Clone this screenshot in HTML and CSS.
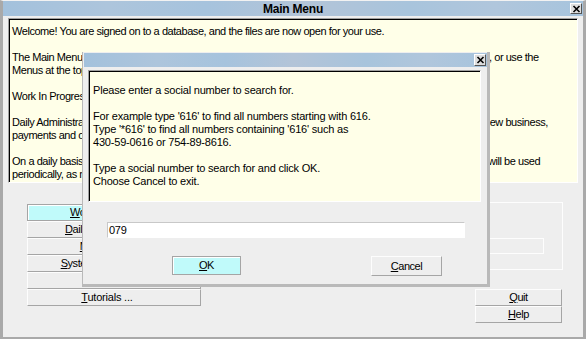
FILE: index.html
```html
<!DOCTYPE html>
<html>
<head>
<meta charset="utf-8">
<link rel="stylesheet" href="styles.css">
</head>
<body>
<div class="window">
  <div class="titlebar">
    <span class="title">Main Menu</span>
    <span class="close main-close"><svg width="9" height="8" viewBox="0 0 9 8"><path d="M1.5 1 L7.5 7 M7.5 1 L1.5 7" stroke="#000" stroke-width="1.6"/></svg></span>
  </div>
  <div class="body">
    <div class="memo">
      <p class="line">Welcome! You are signed on to a database, and the files are now open for your use.</p>
      <p class="line blank"></p>
      <p class="line split s1"><span class="l">The Main Menu lets you choose the area of the system you want to work in</span><span class="r">, or use the</span></p>
      <p class="line">Menus at the top of the screen to go directly to a specific program.</p>
      <p class="line blank"></p>
      <p class="line">Work In Progress lets you review items that have not been completed.</p>
      <p class="line blank"></p>
      <p class="line split s2"><span class="l">Daily Administration is where you would normally enter and review</span><span class="r">new business,</span></p>
      <p class="line">payments and other daily transactions.</p>
      <p class="line blank"></p>
      <p class="line split s3"><span class="l">On a daily basis you will use the first two areas; the remaining areas</span><span class="r">will be used</span></p>
      <p class="line">periodically, as needed.</p>
    </div>
    <div class="lower">
      <div class="menu-buttons">
        <div class="btn hl"><u>W</u>ork In Progress ...</div>
        <div class="btn"><u>D</u>aily Administration ...</div>
        <div class="btn"><u>M</u>aintenance ...</div>
        <div class="btn"><u>S</u>ystem Management ...</div>
        <div class="btn"><u>I</u>nquiries ...</div>
        <div class="btn tut"><u>T</u>utorials ...</div>
      </div>
      <div class="side">
        <div class="group"><div class="field"></div></div>
        <div class="qh">
          <div class="btn small"><u>Q</u>uit</div>
          <div class="btn small"><u>H</u>elp</div>
        </div>
      </div>
    </div>
  </div>

  <div class="dialog">
    <div class="titlebar dlg-title">
      <span class="close dlg-close"><svg width="9" height="8" viewBox="0 0 9 8"><path d="M1.5 1 L7.5 7 M7.5 1 L1.5 7" stroke="#000" stroke-width="1.6"/></svg></span>
    </div>
    <div class="memo dlg-memo">
      <p class="line">Please enter a social number to search for.</p>
      <p class="line blank"></p>
      <p class="line">For example type '616' to find all numbers starting with 616.</p>
      <p class="line">Type '*616' to find all numbers containing '616' such as</p>
      <p class="line">430-59-0616 or 754-89-8616.</p>
      <p class="line blank"></p>
      <p class="line">Type a social number to search for and click OK.</p>
      <p class="line">Choose Cancel to exit.</p>
    </div>
    <div class="input">079</div>
    <div class="dlg-buttons">
      <div class="btn ok"><u>O</u>K</div>
      <div class="btn cancel"><u>C</u>ancel</div>
    </div>
  </div>
</div>
</body>
</html>
```

FILE: styles.css
```css
* { box-sizing: border-box; margin: 0; padding: 0; }
html, body { width: 586px; height: 339px; overflow: hidden; }
body {
  font-family: "Liberation Sans", Arial, sans-serif;
  font-size: 11px;
  color: #000;
  background: #eeeeee;
}
.window {
  position: relative;
  width: 586px;
  height: 339px;
  background: #eeeeee;
  border-top: 1px solid #f2f2f2;
  border-left: 3px solid #a9a9a9;
  border-right: 3px solid #a9a9a9;
  border-bottom: 2px solid #a9a9a9;
}
.titlebar {
  position: relative;
  height: 15px;
  display: flex;
  align-items: center;
  justify-content: center;
  background: linear-gradient(90deg, #a3c1dc 0%, #adc5dc 18%, #a6c3dd 35%, #b3c4d8 52%, #a8c4dc 70%, #b0c6dc 85%, #a7c4dd 100%);
}
.title { font-weight: bold; font-size: 12px; letter-spacing: -0.2px; }
.close {
  position: absolute;
  width: 12px;
  height: 11px;
  background: #dedede;
  border-top: 1px solid #fff;
  border-left: 1px solid #fff;
  border-right: 1px solid #555;
  border-bottom: 1px solid #555;
  display: flex;
  align-items: center;
  justify-content: center;
}
.main-close { right: 1px; top: 2px; }
.body { padding: 2px 5px 0 5px; }
.memo {
  height: 165px;
  background: #ffffe8;
  border: 1px solid;
  border-color: #a0a0a0 #fff #fff #a0a0a0;
  box-shadow: inset 1px 1px 0 #000;
  padding: 6px 3px 0 3px;
  overflow: hidden;
}
.line {
  height: 13px;
  line-height: 13px;
  white-space: nowrap;
  letter-spacing: -0.45px;
}
.split { display: grid; }
.split .l { overflow: hidden; }
.s1 { grid-template-columns: 477px auto; }
.s2 { grid-template-columns: 472px auto; }
.s3 { grid-template-columns: 476px auto; }

.lower {
  display: flex;
  justify-content: space-between;
}
.menu-buttons {
  margin-top: 21px;
  margin-left: 19px;
  width: 174px;
  display: flex;
  flex-direction: column;
}
.btn {
  height: 17px;
  line-height: 15px;
  text-align: center;
  background: #eeeeee;
  border-top: 1px solid #fdfdfd;
  border-left: 1px solid #fdfdfd;
  border-right: 1px solid #a5a5a5;
  border-bottom: 1px solid #a5a5a5;
  letter-spacing: -0.45px;
  white-space: nowrap;
  overflow: hidden;
}
.btn.tut { padding-right: 14px; letter-spacing: -0.2px; }
.btn.hl {
  background: #c0fafa;
  border: 1px solid #a5a5a5;
  box-shadow: inset 1px 1px 0 #fff;
}
.side {
  margin-right: 15px;
  display: flex;
  flex-direction: column;
  align-items: flex-end;
}
.group {
  margin-top: 19px;
  width: 220px;
  height: 68px;
  border: 1px solid #fdfdfd;
  display: flex;
  justify-content: flex-end;
}
.field {
  margin-top: 35px;
  margin-right: 18px;
  width: 160px;
  height: 16px;
  border: 1px solid #fdfdfd;
}
.qh {
  margin-top: 19px;
  margin-right: 1px;
  width: 87px;
  display: flex;
  flex-direction: column;
}

.dialog {
  position: absolute;
  left: 79px;
  top: 51px;
  width: 408px;
  height: 235px;
  background: #eeeeee;
  border-left: 1px solid #b9b9b9;
  border-right: 3px solid #b9b9b9;
  border-bottom: 3px solid #b9b9b9;
  padding: 1px 0 0 1px;
}
.dlg-title { height: 14px; }
.dlg-close { right: 1px; top: 1px; height: 12px; }
.dlg-memo {
  margin: 3px 0 0 4px;
  width: 393px;
  height: 132px;
  padding: 13px 4px 0 4px;
}
.dlg-memo .line { letter-spacing: -0.2px; }
.input {
  margin: 20px 0 0 23px;
  width: 358px;
  height: 16px;
  background: #fff;
  border: 1px solid;
  border-color: #c8c8c8 #fff #fff #c8c8c8;
  padding-left: 1px;
  line-height: 14px;
  letter-spacing: -0.3px;
}
.dlg-buttons {
  margin-top: 18px;
  display: flex;
}
.btn.ok {
  margin-left: 88px;
  width: 69px;
  height: 19px;
  line-height: 17px;
  background: #c0fafa;
  border: 1px solid #a5a5a5;
  box-shadow: inset 1px 1px 0 #fff;
}
.btn.cancel {
  margin-left: 130px;
  width: 71px;
  height: 20px;
  line-height: 18px;
}
```
